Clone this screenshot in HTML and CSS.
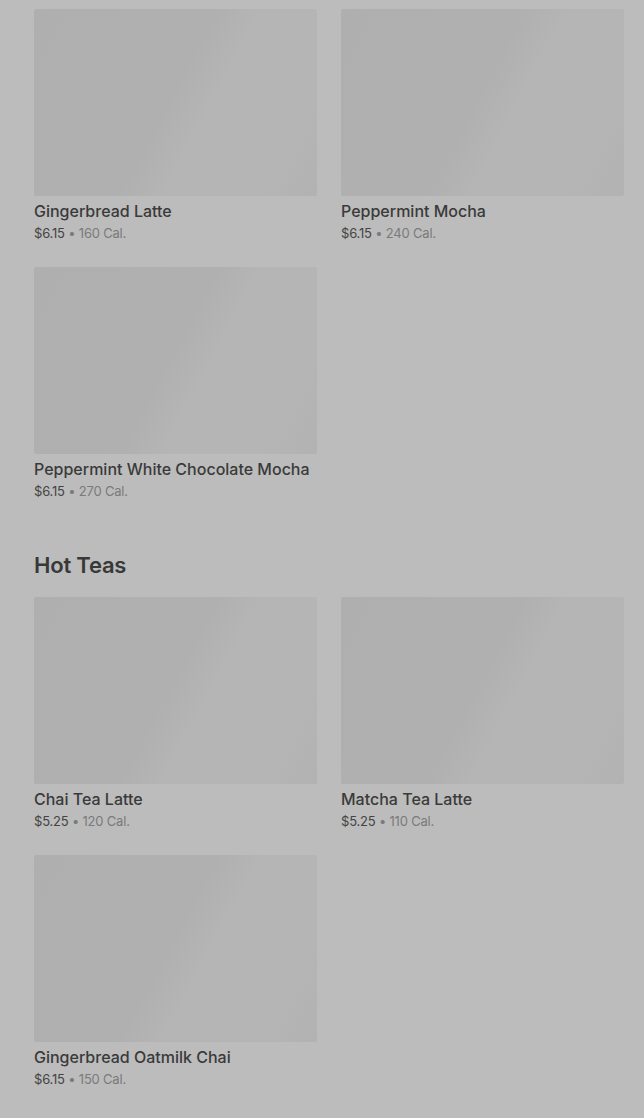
FILE: index.html
```html
<!DOCTYPE html>
<html lang="en">
<head>
  <meta charset="UTF-8">
  <meta name="viewport" content="width=device-width, initial-scale=1.0">
  <title>Menu</title>
  <link rel="stylesheet" href="styles.css">
</head>
<body>
  <div class="menu">
    <section class="category">
      <div class="grid">
        <div class="product">
          <div class="thumb"></div>
          <div class="name">Gingerbread Latte</div>
          <div class="info"><span class="price">$6.15</span> • 160 Cal.</div>
        </div>
        <div class="product">
          <div class="thumb"></div>
          <div class="name">Peppermint Mocha</div>
          <div class="info"><span class="price">$6.15</span> • 240 Cal.</div>
        </div>
        <div class="product">
          <div class="thumb"></div>
          <div class="name">Peppermint White Chocolate Mocha</div>
          <div class="info"><span class="price">$6.15</span> • 270 Cal.</div>
        </div>
      </div>
    </section>

    <section class="category">
      <h2>Hot Teas</h2>
      <div class="grid">
        <div class="product">
          <div class="thumb"></div>
          <div class="name">Chai Tea Latte</div>
          <div class="info"><span class="price">$5.25</span> • 120 Cal.</div>
        </div>
        <div class="product">
          <div class="thumb"></div>
          <div class="name">Matcha Tea Latte</div>
          <div class="info"><span class="price">$5.25</span> • 110 Cal.</div>
        </div>
        <div class="product">
          <div class="thumb"></div>
          <div class="name">Gingerbread Oatmilk Chai</div>
          <div class="info"><span class="price">$6.15</span> • 150 Cal.</div>
        </div>
      </div>
    </section>
  </div>
</body>
</html>
```

FILE: styles.css
```css
* {
  box-sizing: border-box;
  margin: 0;
  padding: 0;
}

body {
  font-family: Inter, "Noto Sans", sans-serif;
  background: #bcbcbc;
  color: #3b3b3b;
}

.menu {
  padding: 9px 20px 0 34px;
}

.category h2 {
  font-size: 22px;
  font-weight: 600;
  letter-spacing: -0.2px;
  color: #383838;
  line-height: 28px;
  margin-top: 50px;
  margin-bottom: 18px;
}

/* griglia prodotti */
.grid {
  display: grid;
  grid-template-columns: 283px 283px;
  column-gap: 24px;
  row-gap: 24px;
}

.thumb {
  height: 187px;
  border-radius: 2px;
  background: linear-gradient(118deg, #afafaf 0%, #b0b0b0 48%, #b5b5b5 60%, #b5b5b5 85%, #b2b2b2 100%);
}

.name {
  margin-top: 4px;
  font-size: 16px;
  font-weight: 500;
  line-height: 22px;
  color: #3a3a3a;
}

.info {
  margin-top: 1px;
  font-size: 13px;
  line-height: 20px;
  letter-spacing: -0.2px;
  color: #7a7a7a;
}

.price {
  color: #444;
}
```
